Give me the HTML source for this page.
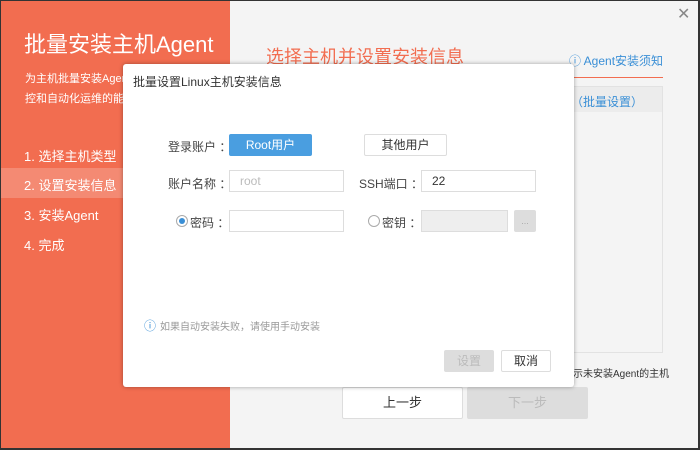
<!DOCTYPE html>
<html><head><meta charset="utf-8"><style>
*{margin:0;padding:0;box-sizing:border-box}
body{width:700px;height:450px;overflow:hidden;font-family:"Liberation Sans","Noto Sans CJK SC",sans-serif;background:#333;position:relative}
.frame{position:absolute;left:1px;top:1px;width:697px;height:447px;background:#f4f4f4;overflow:hidden}
.left{position:absolute;left:0;top:0;width:229px;height:447px;background:#f26d50;color:#fff}
.abs{position:absolute;white-space:nowrap}
.dlg{position:absolute;left:122px;top:63px;width:451px;height:323px;background:#fff;border-radius:3px;box-shadow:0 0 4px rgba(0,0,0,.35)}
.inp{position:absolute;height:22px;border:1px solid #ddd;background:#fff;font-size:12px;padding-left:10px;line-height:20px}
.btn{position:absolute;height:22px;border:1px solid #ddd;background:#fff;font-size:12px;text-align:center;line-height:20px;color:#333;border-radius:2px}
.lbl{position:absolute;font-size:12px;color:#444;white-space:nowrap}
</style></head><body>
<div class="frame">
<div class="left">
<div class="abs" style="left:23px;top:26px;font-size:22px">批量安装主机Agent</div>
<div class="abs" style="left:24px;top:69px;font-size:11px">为主机批量安装Agent，</div>
<div class="abs" style="left:24px;top:89px;font-size:11px">控和自动化运维的能力</div>
<div class="abs" style="left:23px;top:145px;font-size:13px">1. 选择主机类型</div>
<div class="abs" style="left:0;top:167px;width:229px;height:30px;background:rgba(255,255,255,.2)"></div>
<div class="abs" style="left:23px;top:174px;font-size:13px">2. 设置安装信息</div>
<div class="abs" style="left:23px;top:204px;font-size:13px">3. 安装Agent</div>
<div class="abs" style="left:23px;top:234px;font-size:13px">4. 完成</div>
</div>
<div class="abs" style="left:676px;top:3px;font-size:16px;color:#888">✕</div>
<div class="abs" style="left:265px;top:42px;font-size:18px;color:#f26d50">选择主机并设置安装信息</div>
<div class="abs" style="left:568px;top:51px;font-size:12px;color:#3a8fd6">ⓘ Agent安装须知</div>
<div class="abs" style="left:540px;top:85px;width:122px;height:267px;border:1px solid #e2e2e2;background:#f4f4f4"></div>
<div class="abs" style="left:541px;top:86px;width:120px;height:25px;background:#ececec"></div>
<div class="abs" style="left:265px;top:76px;width:397px;height:1px;background:#f26d50"></div>
<div class="abs" style="left:570px;top:92px;font-size:12px;color:#3a8fd6">（批量设置）</div>
<div class="abs" style="left:572px;top:364px;font-size:10px;color:#333">示未安装Agent的主机</div>
<div class="btn" style="left:341px;top:386px;width:121px;height:32px;line-height:30px;font-size:13px">上一步</div>
<div class="btn" style="left:466px;top:386px;width:121px;height:32px;line-height:30px;font-size:13px;background:#ddd;color:#bbb;border-color:#ddd">下一步</div>
<div class="dlg">
<div class="lbl" style="left:10px;top:9px;color:#333">批量设置Linux主机安装信息</div>
<div class="lbl" style="left:45px;top:74px">登录账户 ：</div>
<div class="btn" style="left:106px;top:70px;width:83px;background:#4a9ee0;border-color:#4a9ee0;color:#fff">Root用户</div>
<div class="btn" style="left:241px;top:70px;width:83px">其他用户</div>
<div class="lbl" style="left:45px;top:111px">账户名称 ：</div>
<div class="inp" style="left:106px;top:106px;width:115px;color:#bbb">root</div>
<div class="lbl" style="left:236px;top:111px">SSH端口 ：</div>
<div class="inp" style="left:298px;top:106px;width:115px;color:#333">22</div>
<div class="abs" style="left:53px;top:151px;width:12px;height:12px;border:1px solid #aaa;border-radius:50%"><div style="margin:2px;width:6px;height:6px;border-radius:50%;background:#3a8fd6"></div></div>
<div class="lbl" style="left:67px;top:150px">密码 ：</div>
<div class="inp" style="left:106px;top:146px;width:115px"></div>
<div class="abs" style="left:245px;top:151px;width:12px;height:12px;border:1px solid #aaa;border-radius:50%"></div>
<div class="lbl" style="left:259px;top:150px">密钥 ：</div>
<div class="inp" style="left:298px;top:146px;width:87px;background:#eee"></div>
<div class="btn" style="left:391px;top:146px;width:22px;background:#ddd;border-color:#ddd;color:#aaa;font-size:9px">...</div>
<div class="abs" style="left:21px;top:253px;font-size:12px;color:#3a8fd6">ⓘ</div>
<div class="abs" style="left:37px;top:254px;font-size:10px;color:#999">如果自动安装失败，请使用手动安装</div>
<div class="btn" style="left:321px;top:286px;width:50px;background:#ddd;border-color:#ddd;color:#bbb">设置</div>
<div class="btn" style="left:378px;top:286px;width:50px">取消</div>
</div>
</div>
</body></html>
